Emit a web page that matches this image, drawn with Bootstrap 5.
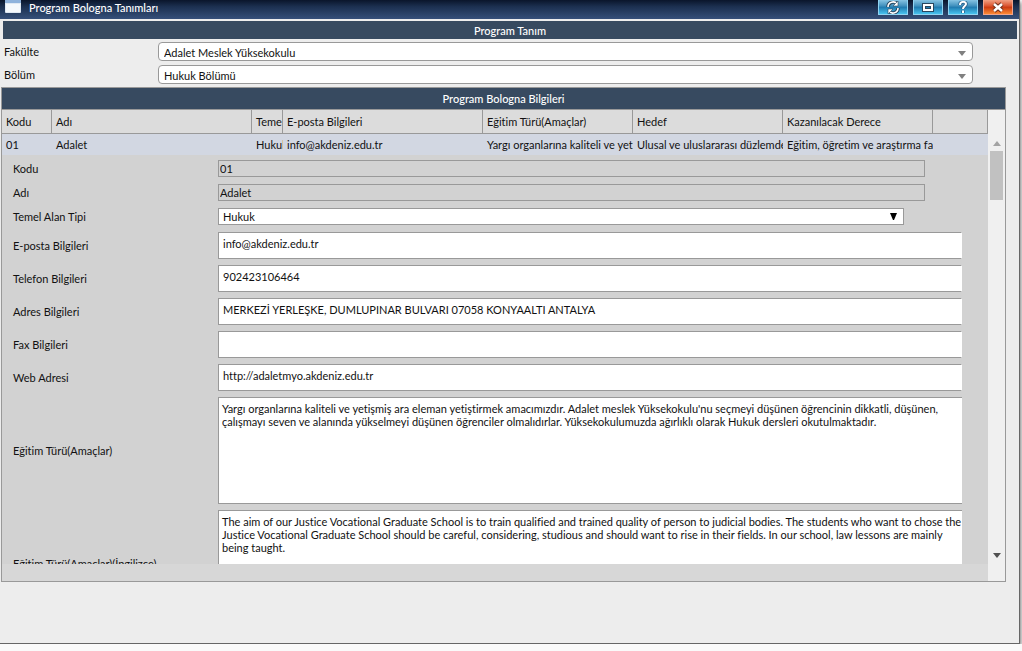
<!DOCTYPE html>
<html lang="tr">
<head>
<meta charset="utf-8">
<meta name="viewport" content="width=device-width, initial-scale=1">
<title>Program Bologna Tanımları</title>
<link href="https://cdn.jsdelivr.net/npm/bootstrap@5.3.0/dist/css/bootstrap.min.css" rel="stylesheet">
<style>
body{font-family:Lato,"Liberation Sans",sans-serif;font-size:11px;line-height:13px;font-variant-ligatures:none;color:#111;background:#fafafa;overflow-x:hidden}
.app-window{min-height:calc(100vh - 7px);margin-right:2px;background:#ededed;border-right:1px solid #666;border-bottom:1px solid #666;box-shadow:1px 2px 4px #777}
.title-bar{height:19px;background:linear-gradient(#0a152b,#1c3050 35%,#36507a);color:#fff;padding:0 6px 0 5px}
.title-bar h1{font-size:11px;line-height:15px;margin:0}
.title-bar svg{display:block}
.win-tools{gap:5px}
.win-btn{width:30px;height:15px;padding:0;border:1px solid #8fd4f2;border-top:0;border-radius:0;background:linear-gradient(#86c3e2,#3c8dbb 45%,#1f78ad 50%,#48c3ef)}
.win-btn.close-btn{border-color:#f2a58c;background:linear-gradient(#f0a083,#d9502a 45%,#c93810 50%,#fb8a35)}
.band{background:#374a60;color:#fff;text-align:center;font-size:11px;margin:0}
.band-top{height:18px;line-height:20px;margin:2px 2px 0 3px}
.band-panel{line-height:22px;height:22px;border-bottom:1px solid #999}
.filters{padding:3px 46px 3px 4px}
.filters label{width:154px;flex:none}
.pick{flex:1;min-width:0;height:19px;border:1px solid #999;border-radius:4px;padding:1px 20px 0 5px;appearance:none;color:#111;background:#fff url("data:image/svg+xml,%3Csvg xmlns='http://www.w3.org/2000/svg' width='8' height='5'%3E%3Cpath d='M0 0h8L4 5z' fill='%23808080'/%3E%3C/svg%3E") no-repeat right 6px top 8px}
.panel{margin:0 13px 0 1px;border:1px solid #999}
.grid-area{background:#d7d7d7;min-width:0}
.grid-table{table-layout:fixed;width:100%;margin:0;border-collapse:separate;border-spacing:0}
.grid-table th{height:24px;padding:0 0 0 4px;font-weight:400;background:#dcdcdc;border-right:1px solid #999;border-bottom:1px solid #999;white-space:nowrap;overflow:hidden}
.grid-table td{height:21px;padding:0 0 0 4px;background:#d2d7e2;white-space:nowrap;overflow:hidden}
.detail{height:409px;margin-bottom:17px;padding:5px 26px 0 11px;background:#d2d2d2;overflow:hidden}
.line{display:flex;align-items:center;margin-bottom:6px}
.line label{width:205px;flex:none}
.line-short{margin-bottom:7px}
.line input,.line textarea,.line select{display:block;flex:1;min-width:0;border:1px solid #999;border-radius:0;color:#111;background:#fff;font-size:11px;line-height:13px;font-variant-ligatures:none}
.line .locked{height:17px;padding:0 1px;margin-right:37px;background:#d2d2d2}
.line .type-pick{height:17px;padding:0 20px 0 4px;margin-right:58px;appearance:none;background:#fff url("data:image/svg+xml,%3Csvg xmlns='http://www.w3.org/2000/svg' width='7' height='7'%3E%3Cpath d='M0 0h7L4 7H3z' fill='%23000'/%3E%3C/svg%3E") no-repeat right 6px top 4px}
.line .box{height:27px;padding:0 3px 4px 4px;border-right-color:#fff}
.line textarea{height:107px;padding:4px 0 0 3px;border-right:0;resize:none;overflow:hidden;white-space:pre}
.scroll-rail{width:17px;background:#f0f0f0;padding:31px 2px 23px}
.thumb{width:13px;height:49px;background:#c1c1c1;margin-top:5px}
</style>
</head>
<body>
<main class="app-window">
  <header class="title-bar d-flex align-items-start">
    <svg width="16" height="14" viewBox="0 0 16 14" aria-hidden="true"><rect width="16" height="13" rx="1" fill="#dfe8f3"/><rect width="16" height="3" fill="#8fb2dc"/><rect x="1" y="4" width="14" height="8" fill="#f5f8fc"/></svg>
    <h1 class="ms-2 me-auto">Program Bologna Tanımları</h1>
    <div class="d-flex win-tools">
      <button class="win-btn" type="button" aria-label="Yenile"><svg class="mx-auto" width="14" height="13" viewBox="0 0 14 13" fill="none"><g stroke="#29475f" stroke-width="3.5"><path d="M2 6a5 5 0 0 1 9-3M12 7a5 5 0 0 1-9 3"/></g><g stroke="#fff" stroke-width="1.6"><path d="M2 6a5 5 0 0 1 9-3M12 7a5 5 0 0 1-9 3"/></g><path d="M12 0v5H7zM2 13V8h5z" fill="#fff" stroke="#29475f" stroke-width=".6"/></svg></button>
      <button class="win-btn" type="button" aria-label="Büyüt"><svg class="mx-auto" width="12" height="13" viewBox="0 0 12 13" fill="none"><rect x="2" y="4" width="8" height="5" stroke="#29475f" stroke-width="4"/><rect x="2" y="4" width="8" height="5" stroke="#fff" stroke-width="2"/></svg></button>
      <button class="win-btn" type="button" aria-label="Yardım"><svg class="mx-auto" width="12" height="13" viewBox="0 0 12 13" fill="none"><path d="M3 4c0-4 6-4 6-1 0 2-3 2-3 5M6 9.5V12" stroke="#29608a" stroke-width="3.6"/><path d="M3 4c0-4 6-4 6-1 0 2-3 2-3 5M6 9.5V12" stroke="#fff" stroke-width="2"/></svg></button>
      <button class="win-btn close-btn" type="button" aria-label="Kapat"><svg class="mx-auto" width="12" height="13" viewBox="0 0 12 13"><path d="M2 3l8 7M10 3l-8 7" stroke="#70301c" stroke-width="4.5"/><path d="M2 3l8 7M10 3l-8 7" stroke="#fff" stroke-width="2.5"/></svg></button>
    </div>
  </header>
  <h2 class="band band-top">Program Tanım</h2>
  <form class="filters">
    <div class="d-flex align-items-center mb-1"><label for="fakulte">Fakülte</label><select class="pick" id="fakulte"><option>Adalet Meslek Yüksekokulu</option></select></div>
    <div class="d-flex align-items-center"><label for="bolum">Bölüm</label><select class="pick" id="bolum"><option>Hukuk Bölümü</option></select></div>
  </form>
  <section class="panel">
    <h2 class="band band-panel">Program Bologna Bilgileri</h2>
    <div class="d-flex">
      <div class="grid-area flex-grow-1">
        <table class="grid-table">
          <colgroup><col style="width:50px"><col style="width:200px"><col style="width:31px"><col style="width:200px"><col style="width:150px"><col style="width:150px"><col style="width:150px"><col></colgroup>
          <thead><tr><th>Kodu</th><th>Adı</th><th>Teme</th><th>E-posta Bilgileri</th><th>Eğitim Türü(Amaçlar)</th><th>Hedef</th><th>Kazanılacak Derece</th><th></th></tr></thead>
          <tbody><tr><td>01</td><td>Adalet</td><td>Hukuk</td><td>info@akdeniz.edu.tr</td><td>Yargı organlarına kaliteli ve yet</td><td>Ulusal ve uluslararası düzlemde</td><td>Eğitim, öğretim ve araştırma fa</td><td></td></tr></tbody>
        </table>
        <form class="detail">
          <div class="line line-short"><label for="kodu">Kodu</label><input class="locked" id="kodu" value="01" readonly></div>
          <div class="line line-short"><label for="adi">Adı</label><input class="locked" id="adi" value="Adalet" readonly></div>
          <div class="line line-short"><label for="alan">Temel Alan Tipi</label><select class="type-pick" id="alan"><option>Hukuk</option></select></div>
          <div class="line"><label for="eposta">E-posta Bilgileri</label><input class="box" id="eposta" value="info@akdeniz.edu.tr"></div>
          <div class="line"><label for="tel">Telefon Bilgileri</label><input class="box" id="tel" value="902423106464"></div>
          <div class="line"><label for="adres">Adres Bilgileri</label><input class="box" id="adres" value="MERKEZİ YERLEŞKE, DUMLUPINAR BULVARI 07058 KONYAALTI ANTALYA"></div>
          <div class="line"><label for="fax">Fax Bilgileri</label><input class="box" id="fax"></div>
          <div class="line"><label for="web">Web Adresi</label><input class="box" id="web" value="http://adaletmyo.akdeniz.edu.tr"></div>
          <div class="line"><label for="amac">Eğitim Türü(Amaçlar)</label><textarea id="amac">Yargı organlarına kaliteli ve yetişmiş ara eleman yetiştirmek amacımızdır. Adalet meslek Yüksekokulu'nu seçmeyi düşünen öğrencinin dikkatli, düşünen,
çalışmayı seven ve alanında yükselmeyi düşünen öğrenciler olmalıdırlar. Yüksekokulumuzda ağırlıklı olarak Hukuk dersleri okutulmaktadır.</textarea></div>
          <div class="line"><label for="aim">Eğitim Türü(Amaçlar)(İngilizce)</label><textarea id="aim">The aim of our Justice Vocational Graduate School is to train qualified and trained quality of person to judicial bodies. The students who want to chose the
Justice Vocational Graduate School should be careful, considering, studious and should want to rise in their fields. In our school, law lessons are mainly
being taught.</textarea></div>
        </form>
      </div>
      <div class="scroll-rail d-flex flex-column align-items-center" aria-hidden="true">
        <svg width="8" height="5"><path d="M0 5h8L4 0z" fill="#a3a3a3"/></svg>
        <div class="thumb"></div>
        <svg class="mt-auto" width="8" height="5"><path d="M0 0h8L4 5z" fill="#505050"/></svg>
      </div>
    </div>
  </section>
</main>
<script src="https://cdn.jsdelivr.net/npm/bootstrap@5.3.0/dist/js/bootstrap.bundle.min.js"></script>
</body>
</html>
